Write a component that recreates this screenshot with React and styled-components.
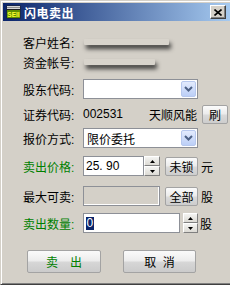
import React from "react";
import styled, { createGlobalStyle } from "styled-components";

const GlobalStyle = createGlobalStyle`
  html, body {
    margin: 0;
    padding: 0;
    background: #d4d0c8;
    overflow: hidden;
  }
  body {
    font-family: "Liberation Sans", "Noto Sans CJK SC", sans-serif;
    font-size: 12px;
    color: #000;
  }
`;

// Window frame
const Window = styled.div`
  width: 233px;
  height: 285px;
  box-sizing: border-box;
  border: 1px solid;
  border-color: #d4d0c8 #404040 #404040 #d4d0c8;
  box-shadow: inset 1px 1px #fff, inset -1px -1px #808080;
  padding: 2px;
  background: #d4d0c8;
  display: flex;
  flex-direction: column;
`;

const TitleBar = styled.div`
  height: 18px;
  flex-shrink: 0;
  background: linear-gradient(to right, #0a246a, #a6caf0);
  display: flex;
  align-items: center;
  padding-left: 3px;
  gap: 3px;
`;

const Title = styled.span`
  color: #fff;
  font-weight: bold;
  font-size: 12px;
  letter-spacing: 0.5px;
  flex: 1;
`;

const CloseButton = styled.div`
  width: 16px;
  height: 14px;
  margin-right: 4px;
  box-sizing: border-box;
  background: #d4d0c8;
  border: 1px solid;
  border-color: #fff #404040 #404040 #fff;
  box-shadow: inset -1px -1px #808080;
  display: flex;
  align-items: center;
  justify-content: center;
`;

const Body = styled.div`
  padding: 11px 0 0 20px;
  display: flex;
  flex-direction: column;
`;

const Row = styled.div`
  display: flex;
  align-items: center;
  height: 20px;
  margin-top: ${(p) => p.$mt || 0}px;
`;

const Label = styled.div`
  width: 60px;
  flex-shrink: 0;
  color: ${(p) => (p.$green ? "#008000" : "#000")};
  white-space: nowrap;
`;

// blurred-out personal data
const Smudge = styled.div`
  width: ${(p) => p.$w}px;
  height: 6px;
  margin: 0 0 0 1px;
  background: #d8d4cc;
  box-shadow: 2px 4px 4px rgba(30, 30, 30, 0.8);
  border-radius: 1px;
`;

const Combo = styled.div`
  width: 115px;
  height: 20px;
  box-sizing: border-box;
  border: 1px solid #8d9097;
  background: #fff;
  display: flex;
  align-items: center;
  justify-content: space-between;
  padding: 0 1px 0 3px;
`;

const DropButton = styled.div`
  width: 15px;
  height: 16px;
  box-sizing: border-box;
  border: 1px solid #b7c8ee;
  border-radius: 2px;
  background: linear-gradient(#e3ebfd, #bccff7);
  display: flex;
  align-items: center;
  justify-content: center;
`;

const Text = styled.span`
  margin-left: ${(p) => p.$ml || 0}px;
  white-space: nowrap;
`;

const Input = styled.div`
  width: ${(p) => p.$w}px;
  height: 20px;
  box-sizing: border-box;
  border: 1px solid #8d9097;
  background: ${(p) => (p.$disabled ? "#d4d0c8" : "#fff")};
  box-shadow: ${(p) => (p.$disabled ? "inset -1px -1px #fff" : "none")};
  display: flex;
  align-items: center;
  padding-left: 2px;
  flex-shrink: 0;
`;

const Selected = styled.span`
  background: #0a246a;
  color: #fff;
  padding: 0 0.5px;
  line-height: 13px;
`;

const Spinner = styled.div`
  width: ${(p) => p.$w}px;
  height: 20px;
  margin-left: ${(p) => p.$ml || 0}px;
  display: flex;
  flex-direction: column;
  flex-shrink: 0;
`;

const SpinHalf = styled.div`
  flex: 1;
  box-sizing: border-box;
  border: 1px solid;
  border-color: #fff #808080 #808080 #fff;
  background: linear-gradient(#f4f4f2, #dcdad4);
  display: flex;
  align-items: center;
  justify-content: center;
`;

const SmallButton = styled.div`
  width: ${(p) => p.$w}px;
  height: 19px;
  margin-left: ${(p) => p.$ml || 0}px;
  box-sizing: border-box;
  border: 1px solid #a3a3a3;
  border-radius: 2px;
  background: linear-gradient(#fbfbfb, #ececec 45%, #d9d9d9 55%, #cdcdcd);
  display: flex;
  align-items: center;
  justify-content: center;
  flex-shrink: 0;
`;

const ButtonRow = styled.div`
  display: flex;
  gap: 22px;
  margin-top: 17px;
  padding-left: 4px;
`;

const BigButton = styled.div`
  width: ${(p) => p.$w}px;
  height: 23px;
  box-sizing: border-box;
  border: 1px solid #a3a3a3;
  border-radius: 2px;
  background: linear-gradient(#fafafa, #ededed 45%, #d6d6d6 55%, #cbcbcb);
  color: ${(p) => (p.$green ? "#008000" : "#000")};
  font-size: 12px;
  display: flex;
  align-items: center;
  justify-content: center;
  white-space: pre;
`;

const AppIcon = () => (
  <svg width="15" height="14" viewBox="0 0 15 14">
    <rect x="0.5" y="0.5" width="14" height="13" fill="#222" />
    <rect x="1" y="1" width="13" height="3" fill="#d8d8d8" />
    <rect x="1" y="2" width="13" height="1" fill="#909090" />
    <rect x="1" y="5" width="13" height="8" fill="#5f8f00" />
    <text x="7.5" y="11.5" fontSize="6.5" fontWeight="bold" fill="#ffff30" textAnchor="middle" fontFamily="Liberation Sans, sans-serif">SEII</text>
  </svg>
);

const CloseIcon = () => (
  <svg width="8" height="7" viewBox="0 0 8 7">
    <path d="M0.5 0.5 L7.5 6.5 M7.5 0.5 L0.5 6.5" stroke="#000" strokeWidth="1.6" />
  </svg>
);

const Chevron = () => (
  <svg width="9" height="6" viewBox="0 0 9 6">
    <path d="M1 1 L4.5 4.5 L8 1" stroke="#4d6185" strokeWidth="2" fill="none" />
  </svg>
);

const Arrow = ({ up }) => (
  <svg width="5" height="3" viewBox="0 0 5 3">
    <path d={up ? "M0 3 L2.5 0 L5 3 Z" : "M0 0 L2.5 3 L5 0 Z"} fill="#000" />
  </svg>
);

const Spin = ({ w, ml }) => (
  <Spinner $w={w} $ml={ml}>
    <SpinHalf>
      <Arrow up />
    </SpinHalf>
    <SpinHalf>
      <Arrow />
    </SpinHalf>
  </Spinner>
);

export default function App() {
  return (
    <>
      <GlobalStyle />
      <Window>
        <TitleBar>
          <AppIcon />
          <Title>闪电卖出</Title>
          <CloseButton>
            <CloseIcon />
          </CloseButton>
        </TitleBar>
        <Body>
          <Row>
            <Label>客户姓名:</Label>
            <Smudge $w={85} />
          </Row>
          <Row>
            <Label>资金帐号:</Label>
            <Smudge $w={71} />
          </Row>
          <Row $mt={7}>
            <Label>股东代码:</Label>
            <Combo>
              <span />
              <DropButton>
                <Chevron />
              </DropButton>
            </Combo>
          </Row>
          <Row $mt={5}>
            <Label>证券代码:</Label>
            <Text>002531</Text>
            <Text $ml={26}>天顺风能</Text>
            <SmallButton $w={26} $ml={5}>刷</SmallButton>
          </Row>
          <Row $mt={4}>
            <Label>报价方式:</Label>
            <Combo>
              <span>限价委托</span>
              <DropButton>
                <Chevron />
              </DropButton>
            </Combo>
          </Row>
          <Row $mt={8}>
            <Label $green>卖出价格:</Label>
            <Input $w={61}>25. 90</Input>
            <Spin w={16} />
            <SmallButton $w={33} $ml={5}>未锁</SmallButton>
            <Text $ml={3}>元</Text>
          </Row>
          <Row $mt={10}>
            <Label>最大可卖:</Label>
            <Input $w={77} $disabled />
            <SmallButton $w={33} $ml={5}>全部</SmallButton>
            <Text $ml={3}>股</Text>
          </Row>
          <Row $mt={7}>
            <Label $green>卖出数量:</Label>
            <Input $w={97}>
              <Selected>0</Selected>
            </Input>
            <Spin w={15} ml={3} />
            <Text $ml={2}>股</Text>
          </Row>
          <ButtonRow>
            <BigButton $w={74} $green>卖　出</BigButton>
            <BigButton $w={73}>取  消</BigButton>
          </ButtonRow>
        </Body>
      </Window>
    </>
  );
}
